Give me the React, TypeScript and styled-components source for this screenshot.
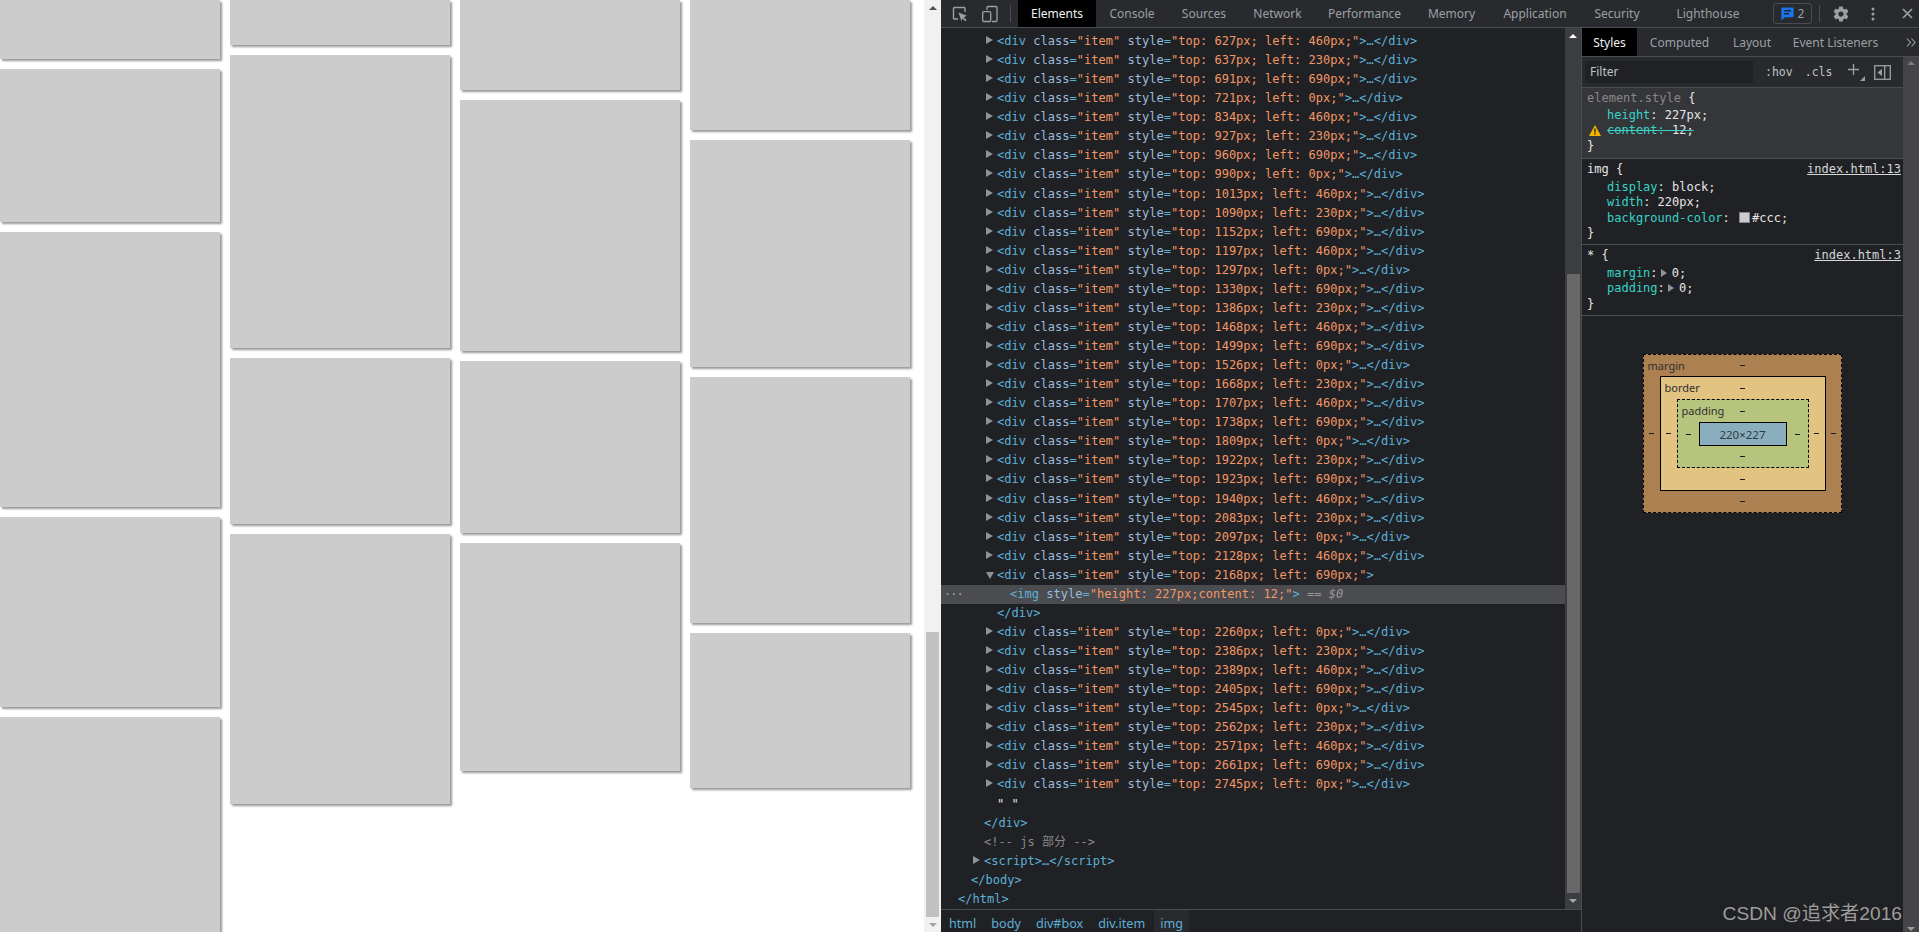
import React from "react";
import styled, { createGlobalStyle } from "styled-components";

const Global = createGlobalStyle`
  html, body { margin: 0; padding: 0; height: 100%; overflow: hidden; background: #fff; }
  #root { height: 100%; }
  * { box-sizing: border-box; }
`;

const UI = `"Noto Sans", "Open Sans", "Liberation Sans", sans-serif`;
const MONO = `"DejaVu Sans Mono", "Liberation Mono", "Noto Sans CJK SC", monospace`;

const Screen = styled.div`
  display: flex;
  width: 1919px;
  height: 932px;
  overflow: hidden;
  position: relative;
`;
const Page = styled.div`
  flex: 0 0 924px;
  height: 932px;
  display: flex;
  gap: 10px;
  overflow: hidden;
  background: #fff;
`;
const Column = styled.div`
  flex: 0 0 220px;
  display: flex;
  flex-direction: column;
  gap: 10px;
`;
const Tile = styled.div<{ $h: number }>`
  flex: 0 0 ${(p) => p.$h}px;
  width: 220px;
  background: #ccc;
  box-shadow: 2px 2px 2px #999;
`;
const PageScrollbar = styled.div`
  flex: 0 0 17px;
  height: 932px;
  background: #f1f1f1;
  display: flex;
  flex-direction: column;
  align-items: center;
`;
const ArrowSlot = styled.div`
  flex: 0 0 15px;
  display: flex;
  align-items: center;
  justify-content: center;
`;
const Spacer = styled.div<{ $h: number }>`
  flex: 0 0 ${(p) => p.$h}px;
`;
const PageThumb = styled.div`
  flex: 0 0 285px;
  width: 13px;
  background: #c1c1c1;
`;
const TriUp = styled.div<{ $c: string }>`
  width: 0;
  height: 0;
  border-left: 4px solid transparent;
  border-right: 4px solid transparent;
  border-bottom: 4px solid ${(p) => p.$c};
`;
const TriDown = styled.div<{ $c: string }>`
  width: 0;
  height: 0;
  border-left: 4px solid transparent;
  border-right: 4px solid transparent;
  border-top: 4px solid ${(p) => p.$c};
`;

const Devtools = styled.div`
  flex: 1;
  height: 932px;
  display: flex;
  flex-direction: column;
  background: #202124;
  min-width: 0;
`;
const Toolbar = styled.div`
  flex: 0 0 28px;
  display: flex;
  align-items: center;
  background: #292a2d;
  border-bottom: 1px solid #494c50;
  padding-left: 11px;
`;
const ToolIcon = styled.div<{ $w: number; $ml?: number }>`
  flex: 0 0 ${(p) => p.$w}px;
  margin-left: ${(p) => p.$ml ?? 0}px;
  display: flex;
  align-items: center;
  justify-content: center;
  height: 27px;
`;
const Sep = styled.div<{ $ml: number; $mr: number }>`
  width: 1px;
  height: 17px;
  background: #494c50;
  margin-left: ${(p) => p.$ml}px;
  margin-right: ${(p) => p.$mr}px;
`;
const MainTab = styled.div<{ $active?: boolean; $ml?: number; $w: number }>`
  flex: 0 0 ${(p) => p.$w}px;
  margin-left: ${(p) => p.$ml ?? 0}px;
  height: 27px;
  display: flex;
  align-items: center;
  justify-content: center;
  font: 12px ${UI};
  white-space: nowrap;
  color: ${(p) => (p.$active ? "#f1f1f1" : "#9aa0a6")};
  background: ${(p) => (p.$active ? "#000" : "transparent")};
`;
const Badge = styled.div`
  flex: 0 0 39px;
  height: 21px;
  margin-left: 20px;
  border: 1px solid #494c50;
  border-radius: 3px;
  display: flex;
  align-items: center;
  justify-content: center;
  gap: 4px;
  font: 12px ${UI};
  color: #9aa0a6;
`;

const Body = styled.div`
  flex: 1;
  display: flex;
  min-height: 0;
`;
const ElementsPane = styled.div`
  flex: 0 0 641px;
  display: flex;
  flex-direction: column;
  min-height: 0;
  border-right: 1px solid #494c50;
`;
const ElementsMain = styled.div`
  flex: 1;
  display: flex;
  min-height: 0;
`;
const Tree = styled.div`
  flex: 1;
  padding-top: 4px;
  overflow: hidden;
  font: 12px/19.07px ${MONO};
  letter-spacing: 0.02px;
  color: #5db0d7;
`;
const Row = styled.div<{ $level: number; $selected?: boolean }>`
  position: relative;
  height: 19.07px;
  white-space: nowrap;
  padding-left: ${(p) => 17 + p.$level * 13}px;
  background: ${(p) => (p.$selected ? "#4a4c50" : "transparent")};
`;
const Expander = styled.span<{ $open?: boolean }>`
  position: absolute;
  margin-left: -11px;
  margin-top: ${(p) => (p.$open ? 6 : 4)}px;
  width: 0;
  height: 0;
  ${(p) =>
    p.$open
      ? `border-left: 4px solid transparent; border-right: 4px solid transparent; border-top: 7px solid #8f9296;`
      : `border-top: 4px solid transparent; border-bottom: 4px solid transparent; border-left: 7px solid #8f9296;`}
`;
const Dots = styled.span`
  position: absolute;
  left: 3px;
  top: 0;
  color: #a0a0a0;
  letter-spacing: -1px;
`;
const AttrName = styled.span`
  color: #9bbbdc;
`;
const AttrValue = styled.span`
  color: #f29766;
`;
const Comment = styled.span`
  color: #898989;
`;
const Marker = styled.span`
  color: #9a9a9a;
`;
const Dollar = styled.span`
  color: #9a9a9a;
  font-style: italic;
`;
const QuoteText = styled.span`
  color: #e8e8e8;
`;
const TreeScrollbar = styled.div`
  flex: 0 0 16px;
  display: flex;
  flex-direction: column;
  align-items: center;
  background: #3c3d40;
`;
const TreeThumb = styled.div`
  flex: 0 0 619px;
  width: 13px;
  background: #686868;
`;
const Crumbs = styled.div`
  flex: 0 0 23px;
  min-height: 0;
  overflow: hidden;
  display: flex;
  align-items: stretch;
  border-top: 1px solid #494c50;
  padding-left: 2px;
  font: 12.6px/27px ${UI};
  color: #5db0d7;
`;
const Crumb = styled.div<{ $active?: boolean }>`
  padding: 0 6px;
  margin-right: 3px;
  background: ${(p) => (p.$active ? "#292a2d" : "transparent")};
`;

const Sidebar = styled.div`
  flex: 1;
  display: flex;
  flex-direction: column;
  min-width: 0;
`;
const SideTabs = styled.div`
  flex: 0 0 29px;
  display: flex;
  align-items: stretch;
  border-bottom: 1px solid #494c50;
  background: #292a2d;
`;
const SideTab = styled.div<{ $active?: boolean; $w: number }>`
  flex: 0 0 ${(p) => p.$w}px;
  display: flex;
  align-items: center;
  justify-content: center;
  font: 12px ${UI};
  white-space: nowrap;
  color: ${(p) => (p.$active ? "#f1f1f1" : "#9aa0a6")};
  background: ${(p) => (p.$active ? "#000" : "transparent")};
`;
const SideMore = styled.div`
  margin-left: 17px;
  display: flex;
  align-items: center;
`;
const SideBody = styled.div`
  flex: 1;
  display: flex;
  min-height: 0;
`;
const StylesCol = styled.div`
  flex: 1;
  min-width: 0;
  display: flex;
  flex-direction: column;
`;
const StylesScrollbar = styled.div`
  flex: 0 0 16px;
  background: #444548;
  display: flex;
  flex-direction: column;
  align-items: center;
  justify-content: space-between;
  padding: 4px 0 1px;
`;
const FilterBar = styled.div`
  flex: 0 0 31px;
  display: flex;
  align-items: center;
  border-bottom: 1px solid #494c50;
  background: #292a2d;
  padding-left: 3px;
`;
const FilterInput = styled.div`
  flex: 0 0 168px;
  height: 22px;
  background: #202124;
  color: #bdc1c6;
  font: 12px/22px ${UI};
  padding-left: 5px;
`;
const FilterChip = styled.div<{ $ml: number }>`
  margin-left: ${(p) => p.$ml}px;
  font: 11.5px ${MONO};
  color: #c0c3c7;
  display: flex;
  align-items: center;
`;
const RuleBlock = styled.div<{ $h: number; $inline?: boolean }>`
  flex: 0 0 ${(p) => p.$h}px;
  background: ${(p) => (p.$inline ? "#35363a" : "#202124")};
  border-bottom: 1px solid #494c50;
  padding: 1px 2px 0 5px;
  font: 12px/15.4px ${MONO};
  color: #e6e6e6;
`;
const RuleHead = styled.div<{ $pb?: number }>`
  display: flex;
  justify-content: space-between;
  height: 17px;
  padding-top: 2px;
  margin-bottom: ${(p) => p.$pb ?? 0}px;
`;
const Selector = styled.span<{ $muted?: boolean }>`
  color: ${(p) => (p.$muted ? "#888" : "#e6e6e6")};
`;
const SourceLink = styled.span`
  color: #d5d7da;
  text-decoration: underline;
`;
const Decl = styled.div`
  position: relative;
  padding-left: 20px;
  height: 15.4px;
  white-space: nowrap;
`;
const Prop = styled.span`
  color: #35d4c7;
`;
const Struck = styled.span`
  text-decoration: line-through;
  color: #35d4c7;
`;
const StruckValue = styled.span`
  color: #e6e6e6;
`;
const Swatch = styled.span`
  display: inline-block;
  width: 11px;
  height: 11px;
  background: #ccc;
  border: 1px solid #888;
  margin: 0 2px 0 2px;
  vertical-align: -1px;
`;
const ValueArrow = styled.span`
  display: inline-block;
  width: 0;
  height: 0;
  border-top: 4px solid transparent;
  border-bottom: 4px solid transparent;
  border-left: 6px solid #8f9296;
  margin: 0 5px 0 -4px;
`;
const WarnIcon = styled.span`
  position: absolute;
  left: 2px;
  top: 2px;
  line-height: 0;
`;
const BoxArea = styled.div`
  flex: 1;
  display: flex;
  justify-content: center;
  padding-top: 38px;
  padding-right: 1px;
`;
const BoxLayer = styled.div<{ $w: number; $h: number; $bg: string; $border: string; $cols: string; $rows: string }>`
  width: ${(p) => p.$w}px;
  height: ${(p) => p.$h}px;
  background: ${(p) => p.$bg};
  border: 1px ${(p) => p.$border} #000;
  display: grid;
  grid-template-columns: ${(p) => p.$cols};
  grid-template-rows: ${(p) => p.$rows};
  font: 11px/14px ${UI};
  color: #303030;
`;
const BoxContent = styled.div`
  width: 88px;
  height: 24px;
  background: #8aaebd;
  border: 1px solid #000;
  display: flex;
  align-items: center;
  justify-content: center;
  font: 11.5px ${UI};
  color: #303942;
  grid-column: 2;
  grid-row: 2;
`;
const BoxLabel = styled.div`
  grid-column: 1;
  grid-row: 1;
  align-self: center;
  white-space: nowrap;
  padding-left: 4px;
  width: 0;
`;
const Dash = styled.div<{ $c: number; $r: number }>`
  grid-column: ${(p) => p.$c};
  grid-row: ${(p) => p.$r};
  align-self: center;
  justify-self: center;
  width: 5px;
  height: 1px;
  background: #1c1c1c;
`;
const Mid = styled.div`
  grid-column: 2;
  grid-row: 2;
`;
const Watermark = styled.div`
  position: absolute;
  right: 17px;
  bottom: 6px;
  font: 19.2px "Liberation Sans", "Noto Sans CJK SC", sans-serif;
  color: #9d9d9d;
  white-space: nowrap;
`;

const columns = [
  [59, 153, 275, 190, 300],
  [45, 293, 166, 270],
  [90, 251, 172, 228],
  [130, 227, 246, 155],
];

const Item = ({ top, left }: { top: number; left: number }) => (
  <Row $level={3}>
    <Expander />
    {"<div "}
    <AttrName>class</AttrName>
    {"="}
    <AttrValue>"item"</AttrValue> <AttrName>style</AttrName>
    {"="}
    <AttrValue>{`"top: ${top}px; left: ${left}px;"`}</AttrValue>
    {">…</div>"}
  </Row>
);

const before: [number, number][] = [
  [627, 460], [637, 230], [691, 690], [721, 0], [834, 460], [927, 230], [960, 690], [990, 0],
  [1013, 460], [1090, 230], [1152, 690], [1197, 460], [1297, 0], [1330, 690], [1386, 230],
  [1468, 460], [1499, 690], [1526, 0], [1668, 230], [1707, 460], [1738, 690], [1809, 0],
  [1922, 230], [1923, 690], [1940, 460], [2083, 230], [2097, 0], [2128, 460],
];
const after: [number, number][] = [
  [2260, 0], [2386, 230], [2389, 460], [2405, 690], [2545, 0], [2562, 230], [2571, 460], [2661, 690], [2745, 0],
];

const InspectIcon = () => (
  <svg width="16" height="16" viewBox="0 0 16 16" fill="none">
    <path d="M6 13H2.500A1 1 0 0 1 1.500 12V2.500A1 1 0 0 1 2.500 1.500H12A1 1 0 0 1 13 2.500V6" stroke="#9aa0a6" strokeWidth="1.400" />
    <path d="M6.500 6.500L15 9.800L11.800 11.200L14.600 14L13.400 15.200L10.600 12.400L9.500 15.200Z" fill="#9aa0a6" />
  </svg>
);
const DeviceIcon = () => (
  <svg width="18" height="18" viewBox="0 0 18 18" fill="none">
    <path d="M6 5V2.500A1 1 0 0 1 7 1.500H15A1 1 0 0 1 16 2.500V15.500A1 1 0 0 1 15 16.500H11" stroke="#9aa0a6" strokeWidth="1.300" />
    <rect x="1.700" y="6.700" width="8" height="9.800" rx="1" stroke="#9aa0a6" strokeWidth="1.300" />
  </svg>
);
const MessageIcon = () => (
  <svg width="13" height="14" viewBox="0 0 13 14">
    <path d="M1.500 0.500H11.500A1.200 1.200 0 0 1 12.700 1.700V9A1.200 1.200 0 0 1 11.500 10.200H4L0.300 13.500V1.700A1.200 1.200 0 0 1 1.500 0.500Z" fill="#1a73e8" />
    <rect x="3" y="3" width="7" height="1.400" fill="#202124" />
    <rect x="3" y="6" width="5" height="1.400" fill="#202124" />
  </svg>
);
const GearIcon = () => (
  <svg width="18" height="18" viewBox="0 0 24 24">
    <path
      fill="#9aa0a6"
      d="M19.430 12.980c.04-.32.070-.64.070-.98s-.03-.66-.07-.98l2.110-1.650c.19-.15.240-.42.120-.64l-2-3.460c-.12-.22-.39-.30-.61-.22l-2.490 1c-.52-.40-1.080-.73-1.690-.98l-.38-2.650A.49.49 0 0 0 14 2h-4c-.25 0-.46.180-.49.420l-.38 2.650c-.61.250-1.170.59-1.690.98l-2.490-1c-.23-.09-.49 0-.61.220l-2 3.460c-.13.220-.07.490.12.640l2.110 1.650c-.04.320-.07.650-.07.980s.03.660.07.980l-2.110 1.650c-.19.150-.24.420-.12.640l2 3.460c.12.220.39.300.61.220l2.490-1c.52.400 1.080.730 1.690.980l.38 2.650c.03.240.24.420.49.420h4c.25 0 .46-.180.49-.420l.38-2.650c.61-.250 1.170-.590 1.690-.980l2.490 1c.23.090.49 0 .61-.220l2-3.460c.12-.220.07-.490-.12-.640l-2.110-1.650zM12 15.500c-1.930 0-3.500-1.570-3.500-3.500s1.570-3.500 3.500-3.500 3.500 1.570 3.500 3.500-1.570 3.500-3.500 3.500z"
    />
  </svg>
);
const KebabIcon = () => (
  <svg width="4" height="14" viewBox="0 0 4 14">
    <circle cx="2" cy="2" r="1.500" fill="#9aa0a6" />
    <circle cx="2" cy="7" r="1.500" fill="#9aa0a6" />
    <circle cx="2" cy="12" r="1.500" fill="#9aa0a6" />
  </svg>
);
const CloseIcon = () => (
  <svg width="11" height="11" viewBox="0 0 11 11">
    <path d="M1 1L10 10M10 1L1 10" stroke="#9aa0a6" strokeWidth="1.700" />
  </svg>
);
const ChevronsIcon = () => (
  <svg width="10" height="9" viewBox="0 0 10 9" fill="none">
    <path d="M1 0.500L4.500 4.500L1 8.500M5.500 0.500L9 4.500L5.500 8.500" stroke="#9aa0a6" strokeWidth="1.100" />
  </svg>
);
const PlusIcon = () => (
  <svg width="18" height="18" viewBox="0 0 18 18">
    <path d="M6.500 1V12M1 6.500H12" stroke="#9aa0a6" strokeWidth="1.300" />
    <path d="M18 13V18H13Z" fill="#9aa0a6" />
  </svg>
);
const DockIcon = () => (
  <svg width="17" height="15" viewBox="0 0 17 15" fill="none">
    <rect x="0.700" y="0.700" width="15.600" height="13.600" stroke="#9aa0a6" strokeWidth="1.300" />
    <rect x="10" y="0.700" width="1.300" height="13.600" fill="#9aa0a6" />
    <path d="M8 4V11L3.500 7.500Z" fill="#9aa0a6" />
  </svg>
);
const WarningIcon = () => (
  <svg width="12" height="11" viewBox="0 0 12 11">
    <path d="M6 0L12 11H0Z" fill="#f4b400" />
    <rect x="5.300" y="3.500" width="1.400" height="4" fill="#202124" />
    <rect x="5.300" y="8.300" width="1.400" height="1.400" fill="#202124" />
  </svg>
);

export default function App() {
  return (
    <>
      <Global />
      <Screen>
        <Page>
          {columns.map((col, i) => (
            <Column key={i}>
              {col.map((h, j) => (
                <Tile key={j} $h={h} />
              ))}
            </Column>
          ))}
        </Page>
        <PageScrollbar>
          <ArrowSlot>
            <TriUp $c="#505050" />
          </ArrowSlot>
          <Spacer $h={617} />
          <PageThumb />
          <ArrowSlot>
            <TriDown $c="#a3a3a3" />
          </ArrowSlot>
        </PageScrollbar>
        <Devtools>
          <Toolbar>
            <ToolIcon $w={16}>
              <InspectIcon />
            </ToolIcon>
            <ToolIcon $w={18} $ml={13}>
              <DeviceIcon />
            </ToolIcon>
            <Sep $ml={11} $mr={7} />
            <MainTab $active $w={78}>Elements</MainTab>
            <MainTab $w={72}>Console</MainTab>
            <MainTab $w={72}>Sources</MainTab>
            <MainTab $w={75}>Network</MainTab>
            <MainTab $w={99}>Performance</MainTab>
            <MainTab $w={75}>Memory</MainTab>
            <MainTab $w={92}>Application</MainTab>
            <MainTab $w={72}>Security</MainTab>
            <MainTab $w={90} $ml={10}>Lighthouse</MainTab>
            <Badge>
              <MessageIcon />2
            </Badge>
            <Sep $ml={7} $mr={12} />
            <ToolIcon $w={18}>
              <GearIcon />
            </ToolIcon>
            <ToolIcon $w={4} $ml={21}>
              <KebabIcon />
            </ToolIcon>
            <ToolIcon $w={11} $ml={27}>
              <CloseIcon />
            </ToolIcon>
          </Toolbar>
          <Body>
            <ElementsPane>
              <ElementsMain>
                <Tree>
                  {before.map(([t, l]) => (
                    <Item key={t} top={t} left={l} />
                  ))}
                  <Row $level={3}>
                    <Expander $open />
                    {"<div "}
                    <AttrName>class</AttrName>=<AttrValue>"item"</AttrValue> <AttrName>style</AttrName>=
                    <AttrValue>"top: 2168px; left: 690px;"</AttrValue>
                    {">"}
                  </Row>
                  <Row $level={4} $selected>
                    <Dots>···</Dots>
                    {"<img "}
                    <AttrName>style</AttrName>=<AttrValue>"height: 227px;content: 12;"</AttrValue>
                    {"> "}
                    <Marker>== </Marker>
                    <Dollar>$0</Dollar>
                  </Row>
                  <Row $level={3}>{"</div>"}</Row>
                  {after.map(([t, l]) => (
                    <Item key={t} top={t} left={l} />
                  ))}
                  <Row $level={3}>
                    <QuoteText>" "</QuoteText>
                  </Row>
                  <Row $level={2}>{"</div>"}</Row>
                  <Row $level={2}>
                    <Comment>{"<!-- js 部分 -->"}</Comment>
                  </Row>
                  <Row $level={2}>
                    <Expander />
                    {"<script>…</script>"}
                  </Row>
                  <Row $level={1}>{"</body>"}</Row>
                  <Row $level={0}>{"</html>"}</Row>
                </Tree>
                <TreeScrollbar>
                  <ArrowSlot>
                    <TriUp $c="#fff" />
                  </ArrowSlot>
                  <Spacer $h={231} />
                  <TreeThumb />
                  <ArrowSlot>
                    <TriDown $c="#a8a8a8" />
                  </ArrowSlot>
                </TreeScrollbar>
              </ElementsMain>
              <Crumbs>
                <Crumb>html</Crumb>
                <Crumb>body</Crumb>
                <Crumb>div#box</Crumb>
                <Crumb>div.item</Crumb>
                <Crumb $active>img</Crumb>
              </Crumbs>
            </ElementsPane>
            <Sidebar>
              <SideTabs>
                <SideTab $active $w={55}>Styles</SideTab>
                <SideTab $w={85}>Computed</SideTab>
                <SideTab $w={60}>Layout</SideTab>
                <SideTab $w={107}>Event Listeners</SideTab>
                <SideMore>
                  <ChevronsIcon />
                </SideMore>
              </SideTabs>
              <SideBody>
                <StylesCol>
                  <FilterBar>
                    <FilterInput>Filter</FilterInput>
                    <FilterChip $ml={12}>:hov</FilterChip>
                    <FilterChip $ml={12}>.cls</FilterChip>
                    <FilterChip $ml={15}>
                      <PlusIcon />
                    </FilterChip>
                    <FilterChip $ml={9}>
                      <DockIcon />
                    </FilterChip>
                  </FilterBar>
                  <RuleBlock $h={71} $inline>
                    <RuleHead $pb={2}>
                      <span>
                        <Selector $muted>element.style</Selector> {"{"}
                      </span>
                    </RuleHead>
                    <Decl>
                      <Prop>height</Prop>: 227px;
                    </Decl>
                    <Decl>
                      <WarnIcon>
                        <WarningIcon />
                      </WarnIcon>
                      <Struck>
                        content: <StruckValue>12;</StruckValue>
                      </Struck>
                    </Decl>
                    <div>{"}"}</div>
                  </RuleBlock>
                  <RuleBlock $h={86}>
                    <RuleHead $pb={3}>
                      <span>
                        <Selector>img</Selector> {"{"}
                      </span>
                      <SourceLink>index.html:13</SourceLink>
                    </RuleHead>
                    <Decl>
                      <Prop>display</Prop>: block;
                    </Decl>
                    <Decl>
                      <Prop>width</Prop>: 220px;
                    </Decl>
                    <Decl>
                      <Prop>background-color</Prop>: <Swatch />
                      #ccc;
                    </Decl>
                    <div>{"}"}</div>
                  </RuleBlock>
                  <RuleBlock $h={71}>
                    <RuleHead $pb={3}>
                      <span>
                        <Selector>*</Selector> {"{"}
                      </span>
                      <SourceLink>index.html:3</SourceLink>
                    </RuleHead>
                    <Decl>
                      <Prop>margin</Prop>: <ValueArrow />0;
                    </Decl>
                    <Decl>
                      <Prop>padding</Prop>: <ValueArrow />0;
                    </Decl>
                    <div>{"}"}</div>
                  </RuleBlock>
                  <BoxArea>
                    <BoxLayer $w={199} $h={159} $bg="#ad8052" $border="dashed" $cols="16px 1fr 16px" $rows="21px 1fr 21px">
                      <BoxLabel>margin</BoxLabel>
                      <Dash $c={2} $r={1} />
                      <Dash $c={1} $r={2} />
                      <Dash $c={3} $r={2} />
                      <Dash $c={2} $r={3} />
                      <Mid>
                        <BoxLayer $w={166} $h={115} $bg="#e3c381" $border="solid" $cols="16px 1fr 16px" $rows="22px 1fr 22px">
                          <BoxLabel>border</BoxLabel>
                          <Dash $c={2} $r={1} />
                          <Dash $c={1} $r={2} />
                          <Dash $c={3} $r={2} />
                          <Dash $c={2} $r={3} />
                          <Mid>
                            <BoxLayer $w={132} $h={69} $bg="#b6c47e" $border="dashed" $cols="21px 1fr 21px" $rows="22px 1fr 21px">
                              <BoxLabel>padding</BoxLabel>
                              <Dash $c={2} $r={1} />
                              <Dash $c={1} $r={2} />
                              <Dash $c={3} $r={2} />
                              <Dash $c={2} $r={3} />
                              <BoxContent>220×227</BoxContent>
                            </BoxLayer>
                          </Mid>
                        </BoxLayer>
                      </Mid>
                    </BoxLayer>
                  </BoxArea>
                </StylesCol>
                <StylesScrollbar>
                  <TriUp $c="#7a7a7a" />
                  <TriDown $c="#9a9a9a" />
                </StylesScrollbar>
              </SideBody>
            </Sidebar>
          </Body>
        </Devtools>
        <Watermark>CSDN @追求者2016</Watermark>
      </Screen>
    </>
  );
}
